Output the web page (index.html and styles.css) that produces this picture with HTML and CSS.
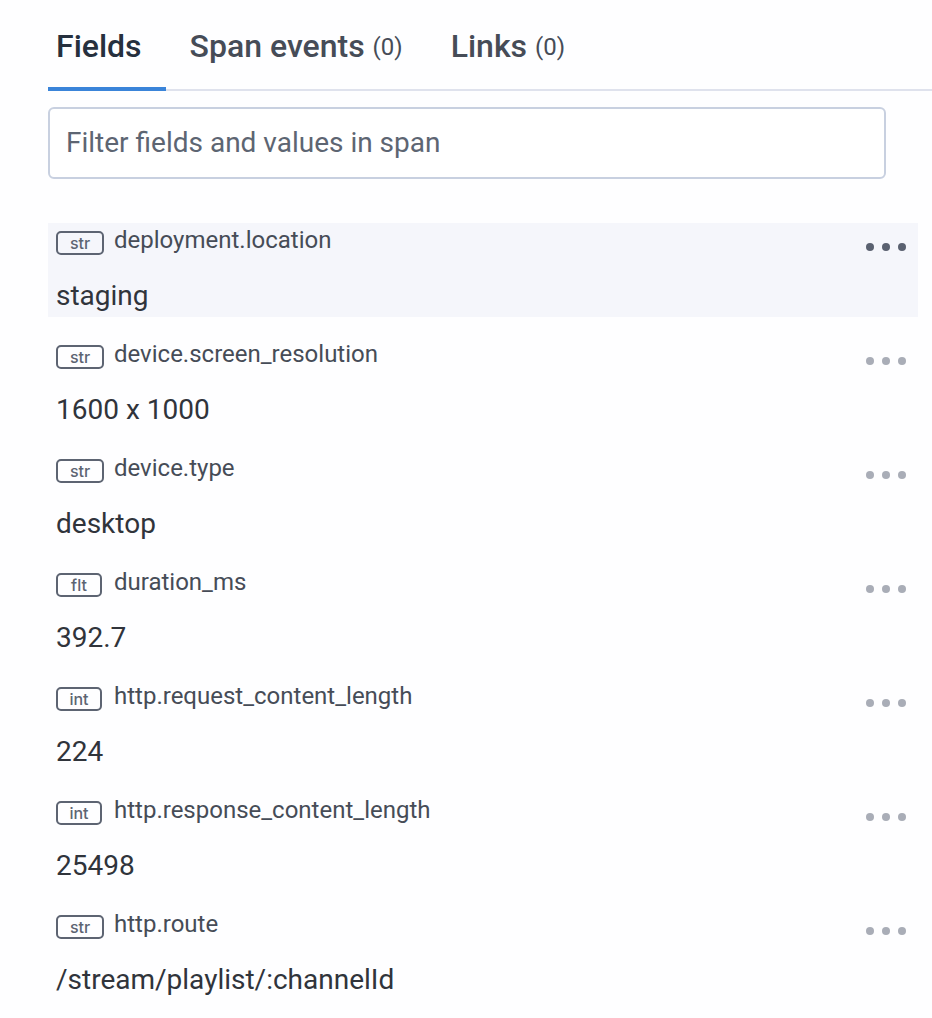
FILE: index.html
```html
<!DOCTYPE html>
<html lang="en">
<head>
<meta charset="utf-8">
<meta name="viewport" content="width=device-width, initial-scale=1">
<title>Span fields</title>
<link rel="stylesheet" href="styles.css">
</head>
<body>
<main class="panel">
  <div class="tabs" role="tablist">
    <button class="tab tab-active" type="button" role="tab" aria-selected="true">Fields</button>
    <button class="tab" type="button" role="tab" aria-selected="false">Span events <span class="count">(0)</span></button>
    <button class="tab" type="button" role="tab" aria-selected="false">Links <span class="count">(0)</span></button>
  </div>
  <div class="filter">
    <input class="filter-input" type="text" aria-label="Filter fields and values in span" placeholder="Filter fields and values in span">
  </div>
  <dl class="fields">
    <div class="field field-hover">
      <dt class="key"><span class="type">str</span><span class="name">deployment.location</span></dt>
      <dd class="value">staging</dd>
      <dd class="actions"><button class="more" type="button" aria-label="More actions"><svg width="40" height="8" viewBox="0 0 40 8"><circle cx="4" cy="4" r="4"/><circle cx="20" cy="4" r="4"/><circle cx="36" cy="4" r="4"/></svg></button></dd>
    </div>
    <div class="field">
      <dt class="key"><span class="type">str</span><span class="name">device.screen_resolution</span></dt>
      <dd class="value">1600 x 1000</dd>
      <dd class="actions"><button class="more" type="button" aria-label="More actions"><svg width="40" height="8" viewBox="0 0 40 8"><circle cx="4" cy="4" r="4"/><circle cx="20" cy="4" r="4"/><circle cx="36" cy="4" r="4"/></svg></button></dd>
    </div>
    <div class="field">
      <dt class="key"><span class="type">str</span><span class="name">device.type</span></dt>
      <dd class="value">desktop</dd>
      <dd class="actions"><button class="more" type="button" aria-label="More actions"><svg width="40" height="8" viewBox="0 0 40 8"><circle cx="4" cy="4" r="4"/><circle cx="20" cy="4" r="4"/><circle cx="36" cy="4" r="4"/></svg></button></dd>
    </div>
    <div class="field">
      <dt class="key"><span class="type type-number">flt</span><span class="name">duration_ms</span></dt>
      <dd class="value">392.7</dd>
      <dd class="actions"><button class="more" type="button" aria-label="More actions"><svg width="40" height="8" viewBox="0 0 40 8"><circle cx="4" cy="4" r="4"/><circle cx="20" cy="4" r="4"/><circle cx="36" cy="4" r="4"/></svg></button></dd>
    </div>
    <div class="field">
      <dt class="key"><span class="type type-number">int</span><span class="name">http.request_content_length</span></dt>
      <dd class="value">224</dd>
      <dd class="actions"><button class="more" type="button" aria-label="More actions"><svg width="40" height="8" viewBox="0 0 40 8"><circle cx="4" cy="4" r="4"/><circle cx="20" cy="4" r="4"/><circle cx="36" cy="4" r="4"/></svg></button></dd>
    </div>
    <div class="field">
      <dt class="key"><span class="type type-number">int</span><span class="name">http.response_content_length</span></dt>
      <dd class="value">25498</dd>
      <dd class="actions"><button class="more" type="button" aria-label="More actions"><svg width="40" height="8" viewBox="0 0 40 8"><circle cx="4" cy="4" r="4"/><circle cx="20" cy="4" r="4"/><circle cx="36" cy="4" r="4"/></svg></button></dd>
    </div>
    <div class="field">
      <dt class="key"><span class="type">str</span><span class="name">http.route</span></dt>
      <dd class="value">/stream/playlist/:channelId</dd>
      <dd class="actions"><button class="more" type="button" aria-label="More actions"><svg width="40" height="8" viewBox="0 0 40 8"><circle cx="4" cy="4" r="4"/><circle cx="20" cy="4" r="4"/><circle cx="36" cy="4" r="4"/></svg></button></dd>
    </div>
  </dl>
</main>
</body>
</html>
```
FILE: styles.css
```css
* {
  box-sizing: border-box;
}

body {
  margin: 0;
  background: #fefeff;
  color: #30343b;
  font-family: Roboto, "Liberation Sans", sans-serif;
}

.panel {
  padding-left: 48px;
}

.tabs {
  display: flex;
  box-shadow: inset 0 -2px #dfe2ed;
}

.tab {
  padding: 28px 24px 23px;
  border: 0;
  border-bottom: 4px solid transparent;
  background: none;
  color: #464c57;
  font: 500 32px/36px Roboto, "Liberation Sans", sans-serif;
  white-space: nowrap;
}

.tab-active {
  padding-left: 8px;
  border-bottom-color: #3a84d9;
  color: #26303e;
}

.count {
  font-size: 24px;
  font-weight: 400;
  line-height: 24px;
  vertical-align: 2px;
}

.filter {
  padding: 16px 46px 44px 0;
}

.filter-input {
  display: block;
  width: 100%;
  height: 72px;
  padding: 0 16px 2px;
  border: 2px solid #c8d0e0;
  border-radius: 6px;
  background: #fff;
  color: #30343b;
  font: 400 28px/32px Roboto, "Liberation Sans", sans-serif;
}

.filter-input::placeholder {
  color: #5d6572;
  opacity: 1;
}

.fields {
  display: grid;
  gap: 20px;
  margin: 0 14px 24px 0;
}

.field {
  display: grid;
  grid-template-columns: 1fr auto;
  row-gap: 21px;
  padding: 0 8px 3px;
}

.field-hover {
  background: #f5f6fb;
}

.key {
  display: grid;
  grid-template-columns: 48px 1fr;
  column-gap: 10px;
  align-items: start;
}

.type {
  margin-top: 8px;
  border: 2px solid #5d6472;
  border-radius: 5px;
  color: #5d6472;
  font: 500 16px/20px Inter, sans-serif;
  text-align: center;
}

.type-number {
  width: 46px;
}

.name {
  color: #464c57;
  font-size: 24px;
  line-height: 34px;
}

.value {
  margin: 0;
  font-size: 28px;
  line-height: 36px;
}

.actions {
  grid-column: 2;
  grid-row: 1;
  margin: 0;
}

.more {
  display: block;
  padding: 20px 4px 6px;
  border: 0;
  background: none;
  color: #a9adb7;
}

.more svg {
  display: block;
  fill: currentColor;
}

.field-hover .more {
  color: #5a6170;
}
```
